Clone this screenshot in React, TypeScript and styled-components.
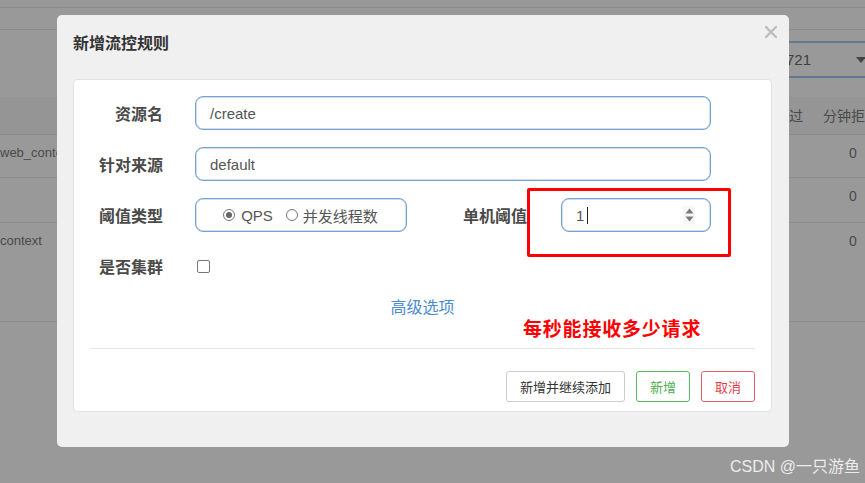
import React from 'react';
import styled, { createGlobalStyle } from 'styled-components';

const GlobalStyle = createGlobalStyle`
  html, body {
    margin: 0;
    padding: 0;
    background: #999999;
    overflow: hidden;
  }
  * {
    box-sizing: border-box;
  }
`;

const FONT = `"Liberation Sans", "Noto Sans CJK SC", Arial, sans-serif`;

const Page = styled.div`
  position: relative;
  width: 865px;
  height: 483px;
  overflow: hidden;
  background: #999999;
  font-family: ${FONT};
  color: #4a4a4a;
  display: flex;
  flex-direction: column;
`;

const Strip = styled.div<{ $h: number }>`
  height: ${p => p.$h}px;
  flex-shrink: 0;
  border-bottom: 1px solid #8b8b8b;
`;

const Toolbar = styled.div`
  height: 67px;
  flex-shrink: 0;
  display: flex;
  justify-content: flex-end;
  padding-top: 11px;
`;

const Select = styled.div`
  width: 300px;
  height: 37px;
  margin-right: -12px;
  border-top: 2px solid #63798e;
  border-bottom: 2px solid #63798e;
  display: flex;
  align-items: center;
  font-size: 15px;
  color: #3f3f3f;
`;

const SelectValue = styled.span`
  flex: 1;
  text-align: right;
  white-space: nowrap;
`;

const SelectArrow = styled.span`
  width: 66px;
  padding-left: 45px;
  display: flex;
  align-items: center;
`;

const TableRow = styled.div<{ $h: number; $head?: boolean }>`
  height: ${p => p.$h}px;
  flex-shrink: 0;
  display: flex;
  align-items: ${p => (p.$head ? 'center' : 'flex-start')};
  padding-top: ${p => (p.$head ? 0 : 8)}px;
  background: ${p => (p.$head ? '#959595' : 'transparent')};
  border-bottom: 1px solid #8b8b8b;
  font-size: 14px;
  line-height: 20px;
  white-space: nowrap;
`;

const FirstCell = styled.div<{ $shift?: number }>`
  flex: 1;
  overflow: hidden;
  font-size: 13px;
  padding-left: ${p => p.$shift ?? 0}px;
`;

const PassCell = styled.div`
  width: 60px;
  text-align: right;
  margin-right: 20px;
`;

const LastCell = styled.div<{ $value?: boolean }>`
  width: 42px;
  flex-shrink: 0;
  padding-left: ${p => (p.$value ? 26 : 0)}px;
  overflow: hidden;
`;

const Modal = styled.div`
  position: absolute;
  left: 57px;
  top: 15px;
  width: 732px;
  background: #f0f0f0;
  border-radius: 5px;
  padding: 18px 17px 35px 16px;
  color: #333;
`;

const ModalTitle = styled.div`
  font-size: 16px;
  line-height: 22px;
  font-weight: bold;
  color: #333;
  margin-bottom: 24px;
`;

const CloseButton = styled.div`
  position: absolute;
  right: 12px;
  top: 11px;
  width: 12px;
  height: 12px;
  display: flex;
`;

const Card = styled.div`
  position: relative;
  background: #fff;
  border: 1px solid #e2e2e2;
  border-radius: 4px;
  padding: 16px 16px 9px;
`;

const Form = styled.div`
  display: flex;
  flex-direction: column;
  gap: 17px;
`;

const Row = styled.div`
  display: flex;
  align-items: center;
  height: 34px;
`;

const Label = styled.div<{ $w?: number; $gap?: number }>`
  width: ${p => p.$w ?? 73}px;
  margin-right: ${p => p.$gap ?? 32}px;
  flex-shrink: 0;
  text-align: right;
  font-size: 16px;
  font-weight: bold;
  color: #4a4a4a;
  white-space: nowrap;
`;

const Field = styled.div<{ $w: number; $center?: boolean }>`
  width: ${p => p.$w}px;
  height: 34px;
  flex-shrink: 0;
  border: 1px solid #76a3d5;
  border-radius: 8px;
  box-shadow: inset 0 0 0 0.5px #9dbde2;
  display: flex;
  align-items: center;
  justify-content: ${p => (p.$center ? 'center' : 'flex-start')};
  padding: 0 15px 0 14px;
  font-size: 15px;
  color: #555;
`;

const RadioItem = styled.label`
  display: flex;
  align-items: center;
  gap: 6px;
  margin-right: 13px;
  &:last-child {
    margin-right: 0;
    gap: 5px;
  }
`;

const RadioCircle = styled.span<{ $checked?: boolean }>`
  width: 12px;
  height: 12px;
  border-radius: 50%;
  border: 1px solid #777;
  background: #fff;
  display: flex;
  align-items: center;
  justify-content: center;
  &::after {
    content: '';
    width: 6px;
    height: 6px;
    border-radius: 50%;
    background: ${p => (p.$checked ? '#666' : 'transparent')};
  }
`;

const Caret = styled.span`
  display: inline-block;
  width: 1px;
  height: 17px;
  background: #222;
  margin-left: 3px;
`;

const Spinner = styled.span`
  margin-left: auto;
  width: 12px;
  height: 18px;
  background: #f6f6f6;
  display: flex;
  align-items: center;
  justify-content: center;
`;

const Checkbox = styled.span`
  width: 13px;
  height: 13px;
  margin-left: 2px;
  border: 1px solid #777;
  border-radius: 2px;
  background: #fff;
`;

const AdvancedLink = styled.div`
  margin-top: 14px;
  text-align: center;
  font-size: 16px;
  line-height: 22px;
  color: #4a8ccf;
`;

const Divider = styled.div`
  margin-top: 29px;
  height: 1px;
  background: #e6e6e6;
`;

const Footer = styled.div`
  margin-top: 22px;
  display: flex;
  justify-content: flex-end;
  gap: 11px;
`;

const Button = styled.button<{ $tone?: 'default' | 'success' | 'danger' }>`
  height: 31px;
  padding: 0 13px;
  background: #fff;
  border-radius: 3px;
  font-family: ${FONT};
  font-size: 13px;
  cursor: pointer;
  border: 1px solid
    ${p => (p.$tone === 'success' ? '#5cb85c' : p.$tone === 'danger' ? '#e0606a' : '#cccccc')};
  color: ${p => (p.$tone === 'success' ? '#4cae4c' : p.$tone === 'danger' ? '#e0404c' : '#333')};
`;

const Highlight = styled.div`
  position: absolute;
  left: 527px;
  top: 188px;
  width: 204px;
  height: 69px;
  border: 3px solid #f00;
  border-radius: 2px;
`;

const Annotation = styled.div`
  position: absolute;
  left: 523px;
  top: 320px;
  font-size: 19px;
  line-height: 20px;
  letter-spacing: 0.8px;
  font-weight: bold;
  color: #f00;
  white-space: nowrap;
`;

const Watermark = styled.div`
  position: absolute;
  right: 5px;
  bottom: 7px;
  font-size: 16px;
  line-height: 18px;
  color: #ececec;
  white-space: nowrap;
`;

const App = () => {
  return (
    <>
      <GlobalStyle />
      <Page>
        <Strip $h={8} />
        <Strip $h={22} />
        <Toolbar>
          <Select>
            <SelectValue>192.168.56.1:8721</SelectValue>
            <SelectArrow>
              <svg width="10" height="6" viewBox="0 0 10 6">
                <path d="M0 0 L10 0 L5 6 Z" fill="#444" />
              </svg>
            </SelectArrow>
          </Select>
        </Toolbar>
        <TableRow $h={38} $head>
          <FirstCell />
          <PassCell>通过</PassCell>
          <LastCell>分钟拒绝</LastCell>
        </TableRow>
        <TableRow $h={43}>
          <FirstCell $shift={-3}>web_context</FirstCell>
          <PassCell />
          <LastCell $value>0</LastCell>
        </TableRow>
        <TableRow $h={45}>
          <FirstCell />
          <PassCell />
          <LastCell $value>0</LastCell>
        </TableRow>
        <TableRow $h={99}>
          <FirstCell $shift={-7}>context</FirstCell>
          <PassCell />
          <LastCell $value>0</LastCell>
        </TableRow>

        <Modal>
          <ModalTitle>新增流控规则</ModalTitle>
          <CloseButton>
            <svg width="12" height="12" viewBox="0 0 12 12">
              <path d="M1 1 L11 11 M11 1 L1 11" stroke="#bdbdbd" strokeWidth="2.4" strokeLinecap="round" />
            </svg>
          </CloseButton>
          <Card>
            <Form>
              <Row>
                <Label>资源名</Label>
                <Field $w={516}>/create</Field>
              </Row>
              <Row>
                <Label>针对来源</Label>
                <Field $w={516}>default</Field>
              </Row>
              <Row>
                <Label>阈值类型</Label>
                <Field $w={212} $center>
                  <RadioItem>
                    <RadioCircle $checked />
                    QPS
                  </RadioItem>
                  <RadioItem>
                    <RadioCircle />
                    并发线程数
                  </RadioItem>
                </Field>
                <Label $w={120} $gap={34}>单机阈值</Label>
                <Field $w={150}>
                  1<Caret />
                  <Spinner>
                    <svg width="9" height="14" viewBox="0 0 9 14">
                      <path d="M4.5 0.5 L8.5 5.5 L0.5 5.5 Z M0.5 8.5 L8.5 8.5 L4.5 13.5 Z" fill="#7a7a7a" />
                    </svg>
                  </Spinner>
                </Field>
              </Row>
              <Row>
                <Label>是否集群</Label>
                <Checkbox />
              </Row>
            </Form>
            <AdvancedLink>高级选项</AdvancedLink>
            <Divider />
            <Footer>
              <Button>新增并继续添加</Button>
              <Button $tone="success">新增</Button>
              <Button $tone="danger">取消</Button>
            </Footer>
          </Card>
        </Modal>

        <Highlight />
        <Annotation>每秒能接收多少请求</Annotation>
        <Watermark>CSDN @一只游鱼</Watermark>
      </Page>
    </>
  );
};

export default App;
